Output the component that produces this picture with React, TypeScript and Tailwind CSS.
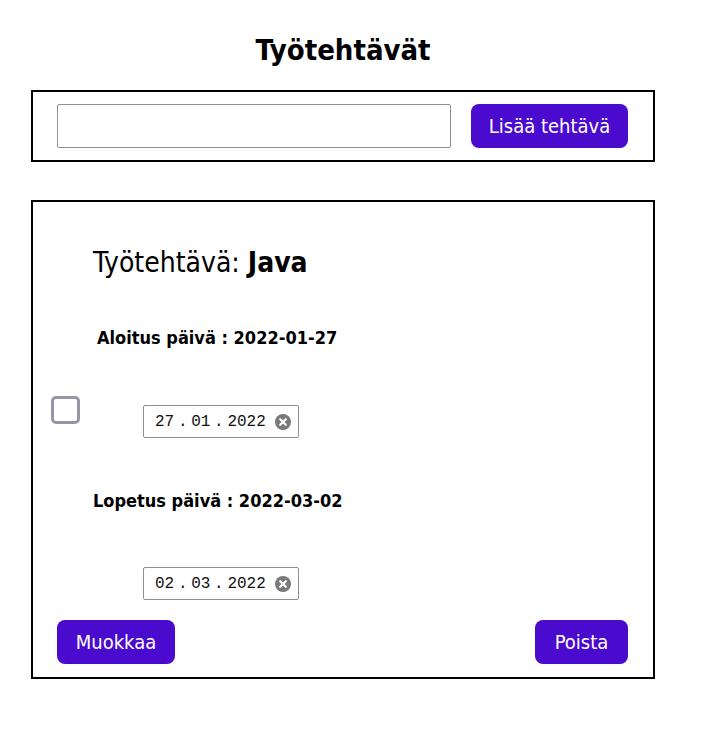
import React from "react";

const sans = "font-['Tahoma','DejaVu_Sans_Condensed','Noto_Sans',sans-serif]";

function ClearIcon() {
  return (
    <svg width="16" height="16" viewBox="0 0 16 16" aria-hidden>
      <circle cx="8" cy="8" r="8" fill="#7a7a7a" />
      <path d="M5.2 5.2 L10.8 10.8 M10.8 5.2 L5.2 10.8" stroke="#fff" strokeWidth="2.2" strokeLinecap="round" />
    </svg>
  );
}

function DateField({ parts }: { parts: string[] }) {
  return (
    <div className="flex h-[33px] w-[156px] items-center justify-between rounded-[2px] border border-[#8f8d9a] bg-white pl-[11px] pr-[7px]">
      <span className="flex font-['Liberation_Mono',monospace] text-[16px] text-[#111]">
        <span>{parts[0]}</span>
        <span className="w-[17px] text-center">.</span>
        <span>{parts[1]}</span>
        <span className="w-[17px] text-center">.</span>
        <span>{parts[2]}</span>
      </span>
      <ClearIcon />
    </div>
  );
}

function PurpleButton({ children, className = "" }: { children: React.ReactNode; className?: string }) {
  return (
    <button
      type="button"
      className={`h-[44px] rounded-[8px] bg-[#4a0bce] text-[20px] text-white ${className}`}
    >
      {children}
    </button>
  );
}

export default function App() {
  return (
    <div className={`min-h-screen bg-white text-black ${sans}`}>
      <div className="ml-[31px] w-[624px] pb-[76px] pt-[30px]">
        <h1 className="h-[40px] text-center text-[29px] font-bold leading-[40px]">Työtehtävät</h1>

        {/* uuden tehtävän lisäys */}
        <div className="mt-[20px] flex h-[72px] items-center gap-[20px] border-2 border-black pl-[24px]">
          <input
            type="text"
            className="h-[44px] w-[394px] rounded-[2px] border border-[#8f8d9a] bg-white px-2 outline-none"
          />
          <PurpleButton className="w-[157px]">Lisää tehtävä</PurpleButton>
        </div>

        {/* tehtäväkortti */}
        <div className="mt-[38px] flex h-[479px] flex-col border-2 border-black">
          <h2 className="ml-[60px] mt-[42px] text-[28px] leading-[38px]">
            Työtehtävä: <b>Java</b>
          </h2>

          <p className="ml-[64px] mt-[44px] text-[18px] font-bold leading-[24px]">Aloitus päivä : 2022-01-27</p>

          <div className="mt-[46px] flex items-start">
            <div className="ml-[18px] h-[28px] w-[29px] rounded-[5px] border-[3px] border-[#9896a6] bg-white" />
            <div className="ml-[63px] mt-[9px]">
              <DateField parts={["27", "01", "2022"]} />
            </div>
          </div>

          <p className="ml-[60px] mt-[51px] text-[18px] font-bold leading-[24px]">Lopetus päivä : 2022-03-02</p>

          <div className="ml-[110px] mt-[54px]">
            <DateField parts={["02", "03", "2022"]} />
          </div>

          <div className="mt-[20px] flex justify-between pl-[24px] pr-[25px]">
            <PurpleButton className="w-[118px]">Muokkaa</PurpleButton>
            <PurpleButton className="w-[93px]">Poista</PurpleButton>
          </div>
        </div>
      </div>
    </div>
  );
}
